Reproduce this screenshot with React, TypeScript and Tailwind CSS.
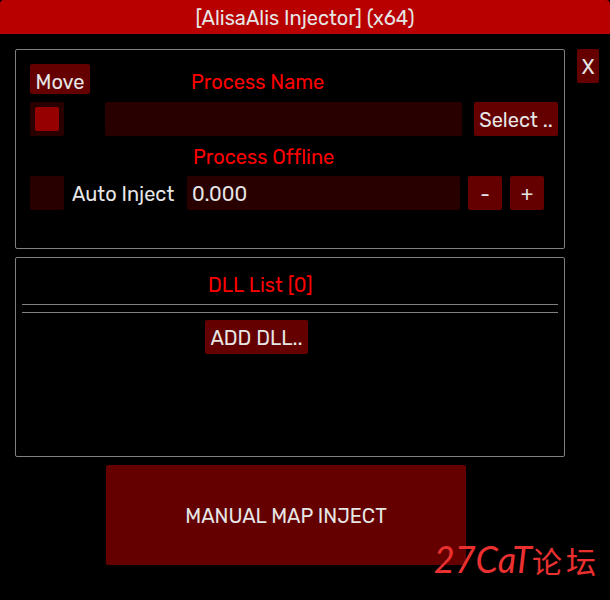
import { useState } from "react";
import type { ButtonHTMLAttributes } from "react";
import { twMerge } from "tailwind-merge";

function Button({ className, ...props }: ButtonHTMLAttributes<HTMLButtonElement>) {
  return (
    <button
      type="button"
      className={twMerge(
        "h-[34px] shrink-0 rounded-xs bg-[#640000] pt-0.5 text-center whitespace-nowrap hover:bg-[#960000]",
        className
      )}
      {...props}
    />
  );
}

function Checkbox({ id, label, defaultChecked }: { id: string; label?: string; defaultChecked?: boolean }) {
  return (
    <span className="relative block size-[34px] shrink-0">
      <input
        id={id}
        type="checkbox"
        aria-label={label}
        defaultChecked={defaultChecked}
        className="peer block size-full appearance-none rounded-xs bg-[#290000]"
      />
      {/* check mark */}
      <span className="pointer-events-none absolute inset-[5px] hidden rounded-xs bg-[#960000] peer-checked:block" />
    </span>
  );
}

export default function App() {
  const [processName, setProcessName] = useState("");
  const [delay, setDelay] = useState("0.000");

  const step = (amount: number) => {
    const next = Math.max(0, (parseFloat(delay) || 0) + amount);
    setDelay(next.toFixed(3));
  };

  return (
    <div className="relative min-h-screen bg-black font-['Rubik','Inter',sans-serif] text-[20px] leading-6 text-[#e6e6e6] [font-variant-ligatures:none]">
      {/* Title bar */}
      <header className="flex h-[34px] items-center justify-center rounded-t-sm bg-[#b90000] pt-0.5">
        <h1>[AlisaAlis Injector] (x64)</h1>
      </header>

      <main className="flex items-start gap-3 pt-[15px] pr-[11px] pl-[15px]">
        <div className="flex min-w-0 flex-1 flex-col gap-2">
          {/* Process */}
          <section className="h-[200px] rounded-xs border border-[#808080] pt-3.5 pr-1.5 pl-3.5">
            <div className="flex h-[30px] items-center">
              <Button className="h-[30px] w-[60px] pt-1.5">Move</Button>
              <label htmlFor="process" className="ml-[101px] pt-1.5 text-[#ff0000]">
                Process Name
              </label>
            </div>

            <div className="mt-2 flex">
              <Checkbox id="attach" label="Attach" defaultChecked />
              <input
                id="process"
                type="text"
                value={processName}
                onChange={(e) => setProcessName(e.target.value)}
                className="mr-3 ml-[41px] h-[34px] min-w-0 flex-1 rounded-xs bg-[#290000] px-[5px] outline-none"
              />
              <Button className="w-[84px]">Select ..</Button>
            </div>

            <p className="mt-2 ml-[163px] h-8 pt-px text-[#ff0000]">Process Offline</p>

            <div className="flex gap-2 pr-3.5">
              <Checkbox id="auto" />
              <label htmlFor="auto" className="flex w-[107px] shrink-0 items-center pt-0.5 whitespace-nowrap">
                Auto Inject
              </label>
              <input
                type="text"
                aria-label="Delay"
                value={delay}
                onChange={(e) => setDelay(e.target.value)}
                className="h-[34px] min-w-0 flex-1 rounded-xs bg-[#290000] px-[5px] pt-0.5 outline-none"
              />
              <Button className="w-[34px]" onClick={() => step(-1)}>-</Button>
              <Button className="w-[34px]" onClick={() => step(1)}>+</Button>
            </div>
          </section>

          {/* DLL list */}
          <section className="h-[200px] rounded-xs border border-[#808080] px-1.5 pt-3.5">
            <h2 className="ml-[186px] h-8 pt-px text-[#ff0000]">DLL List [0]</h2>
            <hr className="border-[#808080]" />
            <hr className="mt-[7px] border-[#808080]" />
            <Button className="mt-[7px] ml-[183px] w-[103px]">ADD DLL..</Button>
          </section>

          <Button className="mr-[99px] ml-[91px] h-[100px]">MANUAL MAP INJECT</Button>
        </div>

        <Button className="w-[22px]">X</Button>
      </main>

      {/* Watermark */}
      <div className="pointer-events-none absolute right-3.5 bottom-5 flex items-baseline leading-10 whitespace-nowrap text-[#eb3030]">
        <span className="font-['Lato',sans-serif] text-[36px] italic">27CaT</span>
        <span className="flex gap-1 font-['Noto_Sans_CJK_SC',sans-serif] text-[30px]">
          <span>论</span>
          <span>坛</span>
        </span>
      </div>
    </div>
  );
}
